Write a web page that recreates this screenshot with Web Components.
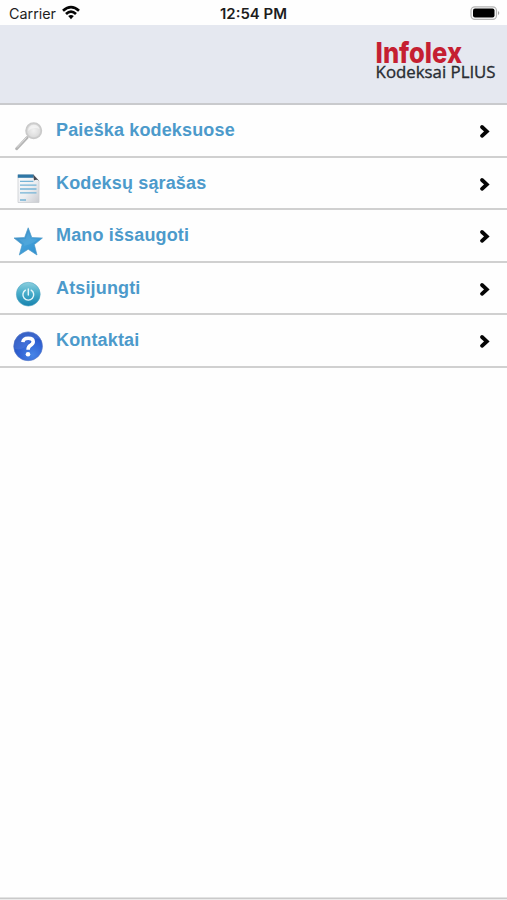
<!DOCTYPE html>
<html lang="lt">
<head>
<meta charset="utf-8">
<title>Infolex Kodeksai PLIUS</title>
<style>
html,body{margin:0;height:100%;background:#fff;font-family:"Liberation Sans",Arial,sans-serif}
</style>
</head>
<body>
<app-screen>
  <status-bar></status-bar>
  <brand-header></brand-header>
  <menu-row icon="search">Paieška kodeksuose</menu-row>
  <menu-row icon="list">Kodeksų sąrašas</menu-row>
  <menu-row icon="star">Mano išsaugoti</menu-row>
  <menu-row icon="power">Atsijungti</menu-row>
  <menu-row icon="help">Kontaktai</menu-row>
</app-screen>
<script>
class AppScreen extends HTMLElement{
  constructor(){super();this.attachShadow({mode:'open'}).innerHTML=`
  <style>:host{display:flex;flex-direction:column;height:100vh;overflow:hidden;background:#fefefe}
  .space{flex:1}.foot{height:1px;background:#cacaca;border-top:1px solid #e3e3e3;border-bottom:1px solid #ebebeb}</style>
  <slot></slot><div class="space"></div><div class="foot"></div>`}
}
class StatusBar extends HTMLElement{
  constructor(){super();this.attachShadow({mode:'open'}).innerHTML=`
  <style>:host{display:block;height:25px;background:#fefefe}svg{display:block}text{font-family:Inter,sans-serif;fill:#1d1d1d}</style>
  <svg width="507" height="25" viewBox="0 0 507 25">
    <text x="9" y="18.5" font-size="14" textLength="47" lengthAdjust="spacingAndGlyphs">Carrier</text>
    <g fill="none" stroke="#050505" stroke-width="2.7">
      <path d="M63 10.8 Q71 3.6 79 10.8"/><path d="M66 14 Q71 9.3 76 14"/>
    </g>
    <path d="M68.2 16.1 Q71 13.7 73.8 16.1 L71 19.2Z" fill="#050505"/>
    <text x="220" y="18.5" font-size="14" font-weight="600" textLength="67" lengthAdjust="spacingAndGlyphs">12:54 PM</text>
    <rect x="471" y="6.8" width="25.5" height="12.6" rx="3.8" fill="#fafafa" stroke="#b4b4b4" stroke-width="1.2"/>
    <rect x="473" y="8.6" width="21.5" height="9" rx="2" fill="#000"/>
    <path d="M498 11 Q500.6 13 498 15.2Z" fill="#a4a4a4"/>
  </svg>`}
}
class BrandHeader extends HTMLElement{
  constructor(){super();this.attachShadow({mode:'open'}).innerHTML=`
  <style>:host{display:flex;justify-content:flex-end;box-sizing:border-box;height:80px;background:#e5e8f0;border-bottom:2px solid #c9cacd}svg{display:block}</style>
  <svg width="147" height="78" viewBox="360 25 147 78">
    <text x="375.6" y="62.7" font-family="Inter,sans-serif" font-weight="800" font-size="29" fill="#c51f32" textLength="86.5" lengthAdjust="spacingAndGlyphs">Infolex</text>
    <text x="375.6" y="77.5" font-family="'Open Sans',sans-serif" font-size="16.8" fill="#292d33" stroke="#292d33" stroke-width=".35" textLength="120" lengthAdjust="spacingAndGlyphs">Kodeksai PLIUS</text>
  </svg>`}
}
const icons={
search:`<defs><radialGradient id="g"><stop stop-color="#f1f1f1"/><stop offset=".75" stop-color="#dedede"/><stop offset="1" stop-color="#c6c6c6"/></radialGradient></defs>
 <path d="M16.6 32.8 L27.2 21.6" stroke="#b4b4b4" stroke-width="2.9" stroke-linecap="round"/><path d="M17 31.6 L26.6 21.4" stroke="#dedede" stroke-width="1"/>
 <circle cx="33.7" cy="14.7" r="7.8" fill="url(#g)" stroke="#cacaca" stroke-width="1.4"/><path d="M28 15 Q33 10.5 39.6 13 Q38 8.8 33.7 8.8 Q28.5 9 28 15Z" fill="#fff" opacity=".5"/>`,
list:`<defs><linearGradient id="g" x2="1" y2="1"><stop stop-color="#fafbfc"/><stop offset=".55" stop-color="#eceef1"/><stop offset="1" stop-color="#c9cbd0"/></linearGradient></defs>
 <path d="M18 5.8H33.5L39 12V33.5H18Z" fill="url(#g)" stroke="#cbced2" stroke-width=".8"/>
 <path d="M17.8 5.5H33.6V8.8H17.8Z" fill="#2e76a5"/><path d="M33.2 5.5L39.4 12.2Q36.5 9.8 34 11.6Z" fill="#45484f"/>
 <g stroke="#75b4d6" stroke-width="1.3"><path d="M20 12.3H33.4M20 16.1H36.5M20 20H36.5M20 23.8H36.5M20 31H26"/></g>`,
star:`<defs><linearGradient id="g" x2="1" y2="1"><stop stop-color="#3b82b7"/><stop offset=".5" stop-color="#43a0d9"/><stop offset="1" stop-color="#2c8bcd"/></linearGradient></defs>
 <path d="M28.2 6.8L31.8 16.6L42.4 17L34.3 23.6L37 34L28.2 28.2L19.3 34L22.2 23.6L14 17L24.6 16.6Z" fill="url(#g)" stroke="#4c99c9" stroke-width=".7" stroke-linejoin="round"/>
 <path d="M28.2 11L30.9 18.1L37.8 18.4Q32 23.2 24 24.8L24.3 23L18.5 18.3L25.6 18.1Z" fill="#6bb5e2" opacity=".3"/>`,
power:`<defs><linearGradient id="g" x2="0" y2="1"><stop stop-color="#8ccfde"/><stop offset=".45" stop-color="#48adca"/><stop offset="1" stop-color="#1682ae"/></linearGradient></defs>
 <circle cx="28.3" cy="20.2" r="11.9" fill="url(#g)" stroke="#54a6c4" stroke-width=".6"/>
 <path d="M25.4 16.2A5.4 5.4 0 1 0 31.2 16.2M28.3 15V21" fill="none" stroke="#e4f6fa" stroke-width="1.4" stroke-linecap="round"/>`,
help:`<defs><radialGradient id="g" cx=".65" cy=".8" r=".8"><stop stop-color="#4685e7"/><stop offset=".6" stop-color="#2f61d2"/><stop offset="1" stop-color="#2450ba"/></radialGradient></defs>
 <circle cx="28.1" cy="20.3" r="14.4" fill="url(#g)" stroke="#5b78c4" stroke-width=".6"/>
 <path d="M14.8 23Q23 25 28 18T40.8 13A14 14 0 0 0 14.8 23" fill="#6b91e2" opacity=".28"/>
 <path d="M22.9 16.1Q23.2 12.2 28.3 12.2Q33.2 12.2 33.2 15.8Q33.2 17.9 30.5 19.4Q28.1 20.8 28.1 23.7" fill="none" stroke="#fff" stroke-width="3.6"/><circle cx="28" cy="28.2" r="2.3" fill="#fff"/>`};
class MenuRow extends HTMLElement{
  constructor(){super();this.attachShadow({mode:'open'})}
  connectedCallback(){this.shadowRoot.innerHTML=`
  <style>:host{display:flex;box-sizing:border-box;height:52.5px;border-bottom:2px solid #d0d0d0;background:#fefefe;color:#4c9acb;font-size:18px;font-weight:700;line-height:21px}
  svg{display:block;flex:none}.icon{width:56px;height:50px}.label{flex:1;padding-top:15px;white-space:nowrap;letter-spacing:.15px}.arrow{width:30px;height:50px}</style>
  <svg class="icon" viewBox="0 0 56 50"><g transform="translate(0 11)">${icons[this.getAttribute('icon')]}</g></svg>
  <span class="label"><slot></slot></span>
  <svg class="arrow" viewBox="477 0 30 50"><path d="M482 22L486.8 26.4L482 30.8" fill="none" stroke="#050505" stroke-width="3.8" stroke-linecap="round"/></svg>`}
}
customElements.define('app-screen',AppScreen);
customElements.define('status-bar',StatusBar);
customElements.define('brand-header',BrandHeader);
customElements.define('menu-row',MenuRow);
</script>
</body>
</html>
